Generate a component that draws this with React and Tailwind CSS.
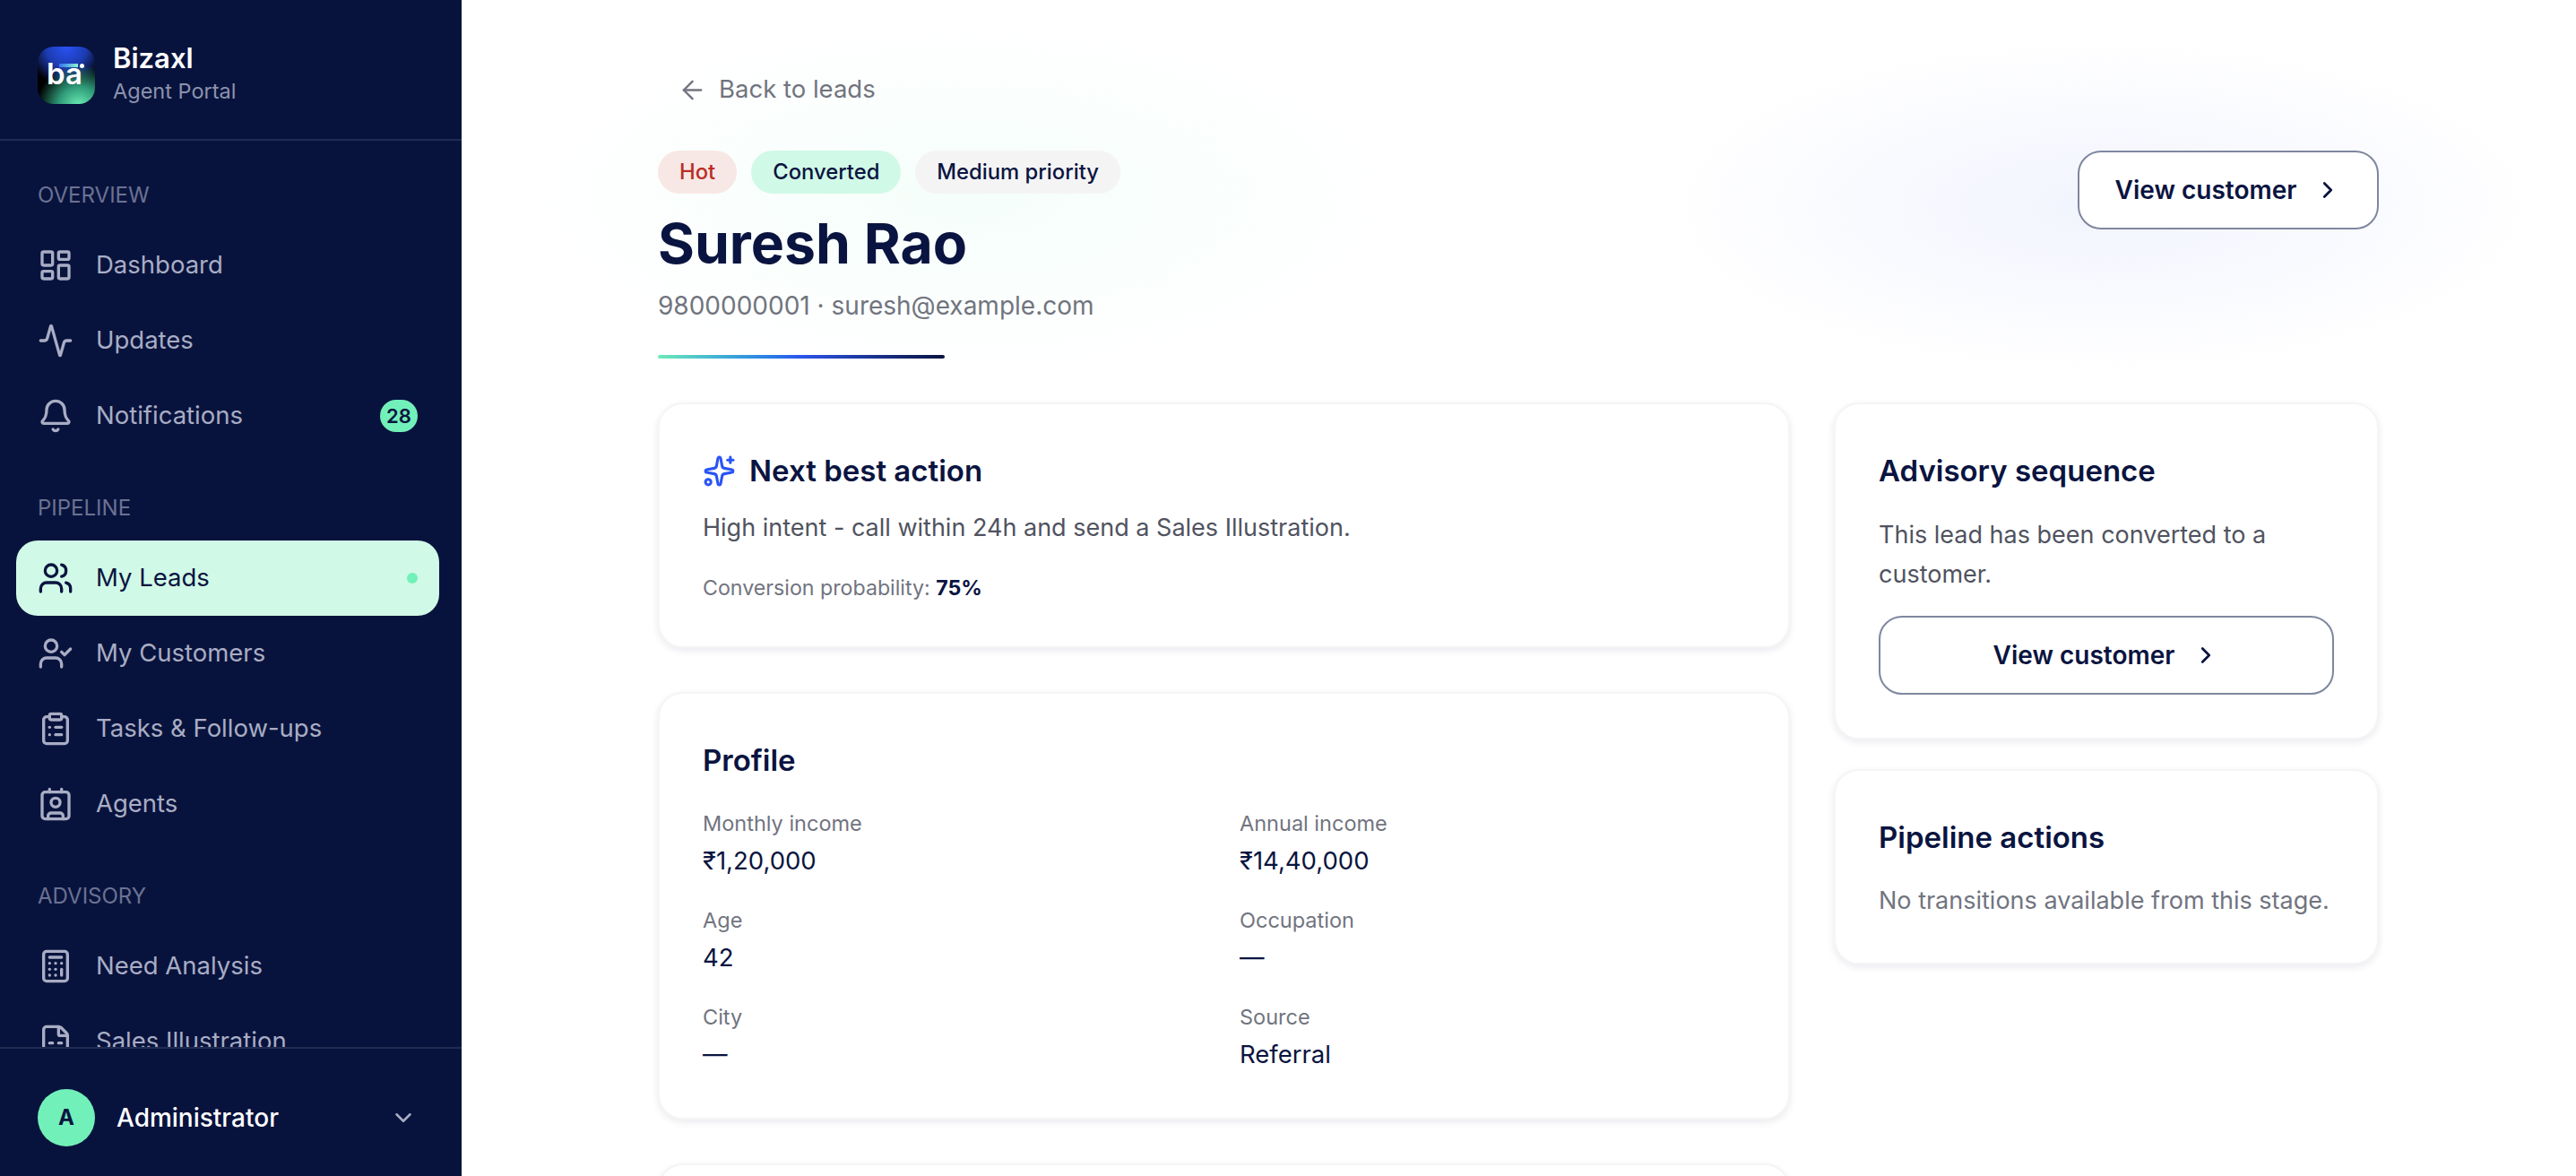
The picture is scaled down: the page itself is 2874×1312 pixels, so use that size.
import React from 'react';
import {
  LayoutDashboard, Activity, Bell, Users, UserCheck, ClipboardList, Contact,
  Calculator, FileSpreadsheet, ChevronDown, ChevronRight, ArrowLeft, Sparkles,
} from 'lucide-react';

const NAV = [
  {
    label: 'OVERVIEW',
    items: [
      { name: 'Dashboard', icon: LayoutDashboard },
      { name: 'Updates', icon: Activity },
      { name: 'Notifications', icon: Bell, badge: '28' },
    ],
  },
  {
    label: 'PIPELINE',
    items: [
      { name: 'My Leads', icon: Users, active: true },
      { name: 'My Customers', icon: UserCheck },
      { name: 'Tasks & Follow-ups', icon: ClipboardList },
      { name: 'Agents', icon: Contact },
    ],
  },
  {
    label: 'ADVISORY',
    items: [
      { name: 'Need Analysis', icon: Calculator },
      { name: 'Sales Illustration', icon: FileSpreadsheet },
    ],
  },
];

const PROFILE = [
  ['Monthly income', '₹1,20,000'],
  ['Annual income', '₹14,40,000'],
  ['Age', '42'],
  ['Occupation', '—'],
  ['City', '—'],
  ['Source', 'Referral'],
];

const Logo = () => (
  <div className="relative h-16 w-16 shrink-0 overflow-hidden rounded-[18px] bg-black">
    <div className="absolute inset-0 bg-[radial-gradient(circle_at_50%_0%,#2952f5_0%,#1c3bb0_32%,transparent_62%)]" />
    <div className="absolute inset-0 bg-[radial-gradient(circle_at_72%_105%,#6ff2b8_0%,#2f9a78_28%,transparent_58%)]" />
    <div className="absolute left-[24px] top-[19px] h-[4px] w-[21px] bg-gradient-to-r from-[#3b6cf0] to-[#8ff5c8]" />
    <div className="absolute left-[47px] top-[19px] h-[5px] w-[5px] rounded-full bg-white" />
    <span className="absolute left-[10px] top-[11px] text-[33px] font-semibold leading-[1.2] text-white">ba</span>
  </div>
);

const NavItem = ({ item }) => {
  const Icon = item.icon;
  return (
    <div
      className={`ml-[18px] mr-[25px] flex h-[84px] shrink-0 items-center gap-[25px] rounded-[24px] px-[24px] ${
        item.active ? 'bg-[#d1f9e7] text-[#0a1440]' : 'text-[#a9adc4]'
      }`}
    >
      <Icon className="h-[40px] w-[40px] shrink-0" strokeWidth={2} />
      <span className="flex-1 text-[27.5px]">{item.name}</span>
      {item.badge && (
        <span className="flex h-[36px] w-[42px] items-center justify-center rounded-full bg-[#72f0b9] text-[22px] font-semibold text-[#0a1440]">
          {item.badge}
        </span>
      )}
      {item.active && <span className="h-[12px] w-[12px] rounded-full bg-[#72f0b9]" />}
    </div>
  );
};

const Sidebar = () => (
  <aside className="flex h-screen w-[515px] shrink-0 flex-col bg-[#08133d]">
    <div className="flex h-[157px] shrink-0 items-center gap-[20px] border-b-2 border-[#212b52] px-[42px] pt-[13px]">
      <Logo />
      <div className="mb-[6px]">
        <div className="text-[31px] font-semibold leading-[42px] text-white">Bizaxl</div>
        <div className="text-[23.5px] leading-[32px] text-[#8d93ad]">Agent Portal</div>
      </div>
    </div>
    <nav className="flex-1 overflow-hidden pt-[41px]">
      {NAV.map((group) => (
        <div key={group.label} className="mb-[41px]">
          <div className="flex h-[40px] items-center px-[42px] text-[24px] text-[#6b7292]">{group.label}</div>
          <div className="mt-[16px] flex flex-col">
            {group.items.map((item) => (
              <NavItem key={item.name} item={item} />
            ))}
          </div>
        </div>
      ))}
    </nav>
    <div className="flex h-[144px] shrink-0 items-center gap-[24px] border-t-2 border-[#212b52] px-[42px] pt-[12px]">
      <div className="flex h-16 w-16 items-center justify-center rounded-full bg-[#72f0b9] text-[24px] font-bold text-[#0a1440]">A</div>
      <span className="flex-1 text-[28px] font-medium text-white">Administrator</span>
      <ChevronDown className="mr-[8px] h-[30px] w-[30px] text-[#a9adc4]" strokeWidth={2} />
    </div>
  </aside>
);

const Card = ({ className = '', children }) => (
  <div className={`rounded-[28px] border-2 border-[#f5f5f6] bg-white shadow-[0_3px_8px_rgba(10,20,64,0.09)] ${className}`}>
    {children}
  </div>
);

const ViewCustomer = ({ className = '' }) => (
  <button className={`flex h-[88px] items-center justify-center gap-[20px] rounded-[26px] border-2 border-[#7f879f] bg-white text-[28px] font-semibold text-[#0a1440] ${className}`}>
    View customer
    <ChevronRight className="h-[30px] w-[30px]" strokeWidth={2.2} />
  </button>
);

export default function App() {
  return (
    <div className="flex h-screen overflow-hidden bg-white font-['Inter',sans-serif] text-[#0a1440]">
      <Sidebar />
      <main className="relative flex-1 overflow-hidden">
        {/* faint colour washes behind the header */}
        <div className="absolute left-[60px] top-[20px] h-[400px] w-[1000px] bg-[radial-gradient(ellipse_at_center,rgba(110,240,185,0.07),transparent_70%)]" />
        <div className="absolute left-[1330px] top-[40px] h-[380px] w-[1000px] bg-[radial-gradient(ellipse_at_center,rgba(70,100,240,0.07),transparent_70%)]" />

        <div className="relative ml-[219px] w-[1920px] pt-[76px]">
          <div className="flex h-[48px] items-center gap-[13px] pl-[22px] text-[27.5px] text-[#71747f]">
            <ArrowLeft className="h-[33px] w-[33px]" strokeWidth={1.75} />
            Back to leads
          </div>

          <div className="mt-[44px] flex items-start justify-between">
            <div>
              <div className="flex gap-[16px]">
                <span className="flex h-[48px] items-center rounded-full bg-[#f8e8e5] px-[24px] text-[23.8px] font-medium text-[#b92d26]">Hot</span>
                <span className="flex h-[48px] items-center rounded-full bg-[#d1f9e7] px-[24px] text-[23.8px] font-medium">Converted</span>
                <span className="flex h-[48px] items-center rounded-full bg-[#f4f4f5] px-[24px] text-[23.8px] font-medium">Medium priority</span>
              </div>
              <h1 className="mt-[16px] text-[62.5px] font-bold leading-[78px]">Suresh Rao</h1>
              <p className="mt-[10px] text-[28px] leading-[42px] text-[#71747f]">9800000001 · suresh@example.com</p>
              <div className="mt-[34px] h-[4px] w-[320px] rounded-full bg-gradient-to-r from-[#6eeab6] via-[#2b55ec] to-[#0a1440]" />
            </div>
            <ViewCustomer className="w-[336px]" />
          </div>

          <div className="mt-[49px] grid grid-cols-[1263px_608px] gap-x-[49px]">
            <div className="flex flex-col gap-[49px]">
              <Card className="h-[274px] px-[48px] pt-[50px]">
                <div className="flex items-center gap-[15px]">
                  <Sparkles className="h-[37px] w-[37px] text-[#2a55f5]" strokeWidth={2} />
                  <h2 className="text-[33px] font-semibold leading-[48px]">Next best action</h2>
                </div>
                <p className="mt-[18px] text-[27px] leading-[44px] text-[#50535f]">High intent - call within 24h and send a Sales Illustration.</p>
                <p className="mt-[28px] text-[23.2px] leading-[34px] text-[#71747f]">
                  Conversion probability: <b className="font-bold text-[#0a1440]">75%</b>
                </p>
              </Card>

              <Card className="h-[477px] px-[48px] pt-[50px]">
                <h2 className="text-[33px] font-semibold leading-[48px]">Profile</h2>
                <div className="mt-[29px] grid grid-cols-[599px_1fr]">
                  {PROFILE.map(([label, value]) => (
                    <div key={label} className="h-[108px]">
                      <div className="text-[23.5px] leading-[36px] text-[#71747f]">{label}</div>
                      <div className="mt-[2px] text-[27.5px] leading-[42px]">{value}</div>
                    </div>
                  ))}
                </div>
              </Card>

              <Card className="h-[300px]" />
            </div>

            <div className="flex flex-col gap-[33px]">
              <Card className="h-[376px] px-[48px] pt-[50px]">
                <h2 className="text-[33px] font-semibold leading-[48px]">Advisory sequence</h2>
                <p className="mt-[26px] text-[27px] leading-[44px] text-[#50535f]">This lead has been converted to a customer.</p>
                <ViewCustomer className="mt-[24px] w-full" />
              </Card>
              <Card className="h-[218px] px-[48px] pt-[50px]">
                <h2 className="text-[33px] font-semibold leading-[48px]">Pipeline actions</h2>
                <p className="mt-[25px] text-[27px] leading-[44px] text-[#71747f]">No transitions available from this stage.</p>
              </Card>
            </div>
          </div>
        </div>
      </main>
    </div>
  );
}
